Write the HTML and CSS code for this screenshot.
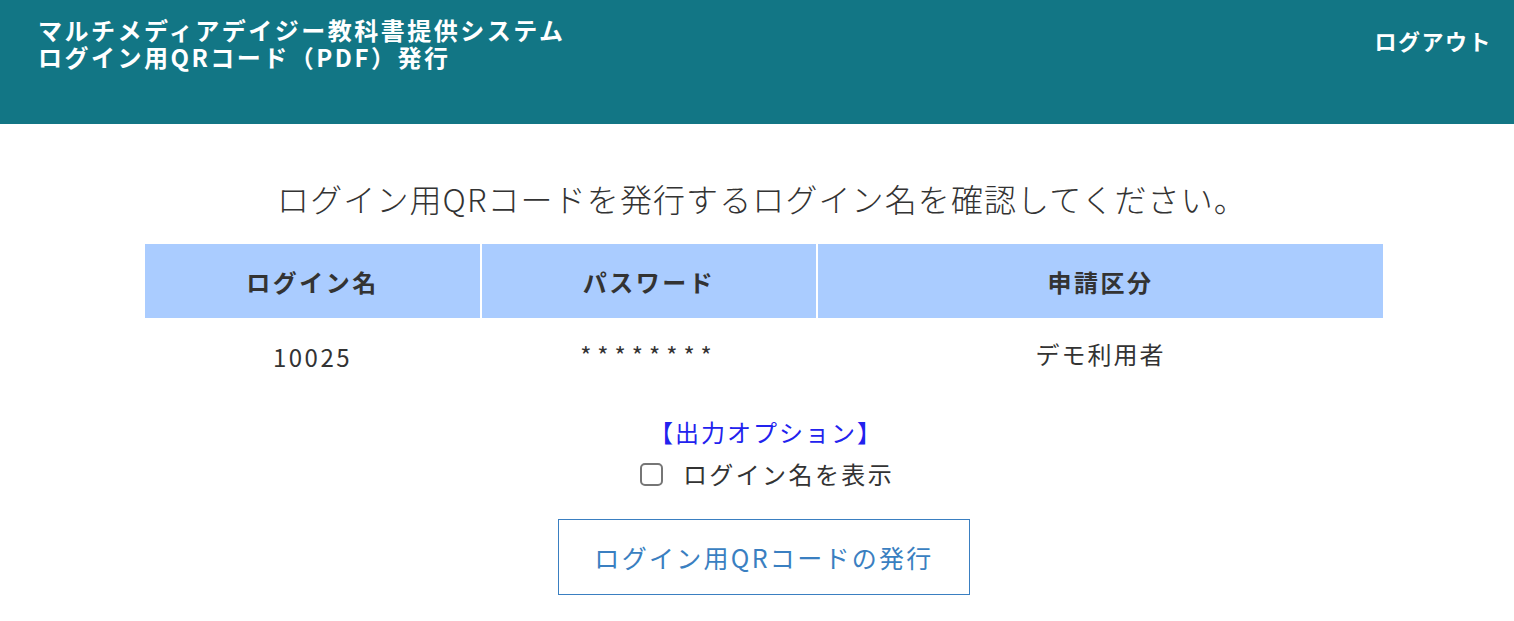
FILE: index.html
```html
<!DOCTYPE html>
<html lang="ja">
<head>
<meta charset="utf-8">
<title>ログイン用QRコード（PDF）発行</title>
<link rel="stylesheet" href="styles.css">
</head>
<body>
<header class="header">
  <h1 class="site-title"><span class="title-line">マルチメディアデイジー教科書提供システム</span><span class="title-line">ログイン用QRコード（PDF）発行</span></h1>
  <a class="logout" href="#">ログアウト</a>
</header>
<main class="main">
  <p class="lead">ログイン用QRコードを発行するログイン名を確認してください。</p>
  <table class="info">
    <thead>
      <tr><th class="c1">ログイン名</th><th class="c2">パスワード</th><th class="c3">申請区分</th></tr>
    </thead>
    <tbody>
      <tr><td class="num">10025</td><td class="pw">********</td><td class="kind">デモ利用者</td></tr>
    </tbody>
  </table>
  <div class="options">
    <div class="opt-title">【出力オプション】</div>
    <label class="opt-check"><input type="checkbox" class="cb"><span>ログイン名を表示</span></label>
  </div>
  <button class="issue" type="button">ログイン用QRコードの発行</button>
</main>
</body>
</html>
```

FILE: styles.css
```css
html, body {
  margin: 0;
  padding: 0;
  background: #ffffff;
  font-family: "Noto Sans CJK JP", "Noto Sans", sans-serif;
  color: #333333;
}
.header {
  background: #127685;
  height: 124px;
  display: flex;
  justify-content: space-between;
  align-items: flex-start;
  padding: 0 22px 0 38px;
  box-sizing: border-box;
}
.site-title {
  margin: 16px 0 0 0;
  font-size: 24px;
  line-height: 27px;
  font-weight: 700;
  letter-spacing: 2.5px;
  color: #ffffff;
}
.title-line {
  display: block;
}
.logout {
  margin-top: 24px;
  font-size: 22px;
  line-height: 32px;
  font-weight: 700;
  letter-spacing: 1.5px;
  color: #ffffff;
  text-decoration: none;
}
.main {
  display: flex;
  flex-direction: column;
  align-items: center;
}
.lead {
  margin: 50px 0 0 10px;
  font-size: 32px;
  line-height: 48px;
  font-weight: 300;
  letter-spacing: 1.1px;
  color: #333333;
}
.info {
  margin: 22px 0 0 14px;
  width: 1242px;
  border-collapse: separate;
  border-spacing: 2px 0;
}
.info th {
  background: #aaccff;
  height: 74px;
  padding: 0;
  font-size: 24px;
  font-weight: 700;
  letter-spacing: 2.5px;
  color: #333333;
}
.c1 { width: 335px; }
.c2 { width: 334px; }
.info td {
  height: 70px;
  padding: 0;
  text-align: center;
  font-size: 24px;
  letter-spacing: 2px;
  color: #333333;
}
.info td.num { letter-spacing: 2.5px; }
.info td.kind { padding-bottom: 6px; }
.info td.pw { padding-bottom: 4px; letter-spacing: 6px; }
.options {
  margin: 20px 0 0 0;
  display: flex;
  flex-direction: column;
  align-items: center;
}
.opt-title {
  margin-left: 18px;
  font-size: 24px;
  line-height: 36px;
  letter-spacing: 2px;
  color: #2222ee;
}
.opt-check {
  margin: 4px 0 0 20px;
  display: flex;
  align-items: center;
  gap: 20px;
  font-size: 24px;
  line-height: 40px;
  letter-spacing: 2.4px;
  color: #333333;
}
.cb {
  appearance: none;
  -webkit-appearance: none;
  margin: 0;
  width: 23px;
  height: 23px;
  border: 2px solid #767676;
  border-radius: 5px;
  background: #ffffff;
  box-sizing: border-box;
}
.issue {
  margin: 25px 0 0 14px;
  width: 412px;
  height: 76px;
  background: #ffffff;
  border: 1px solid #3a7fc1;
  color: #3a7fc1;
  font-family: "Noto Sans CJK JP", "Noto Sans", sans-serif;
  font-size: 25px;
  letter-spacing: 2.3px;
  padding: 0;
}
```
